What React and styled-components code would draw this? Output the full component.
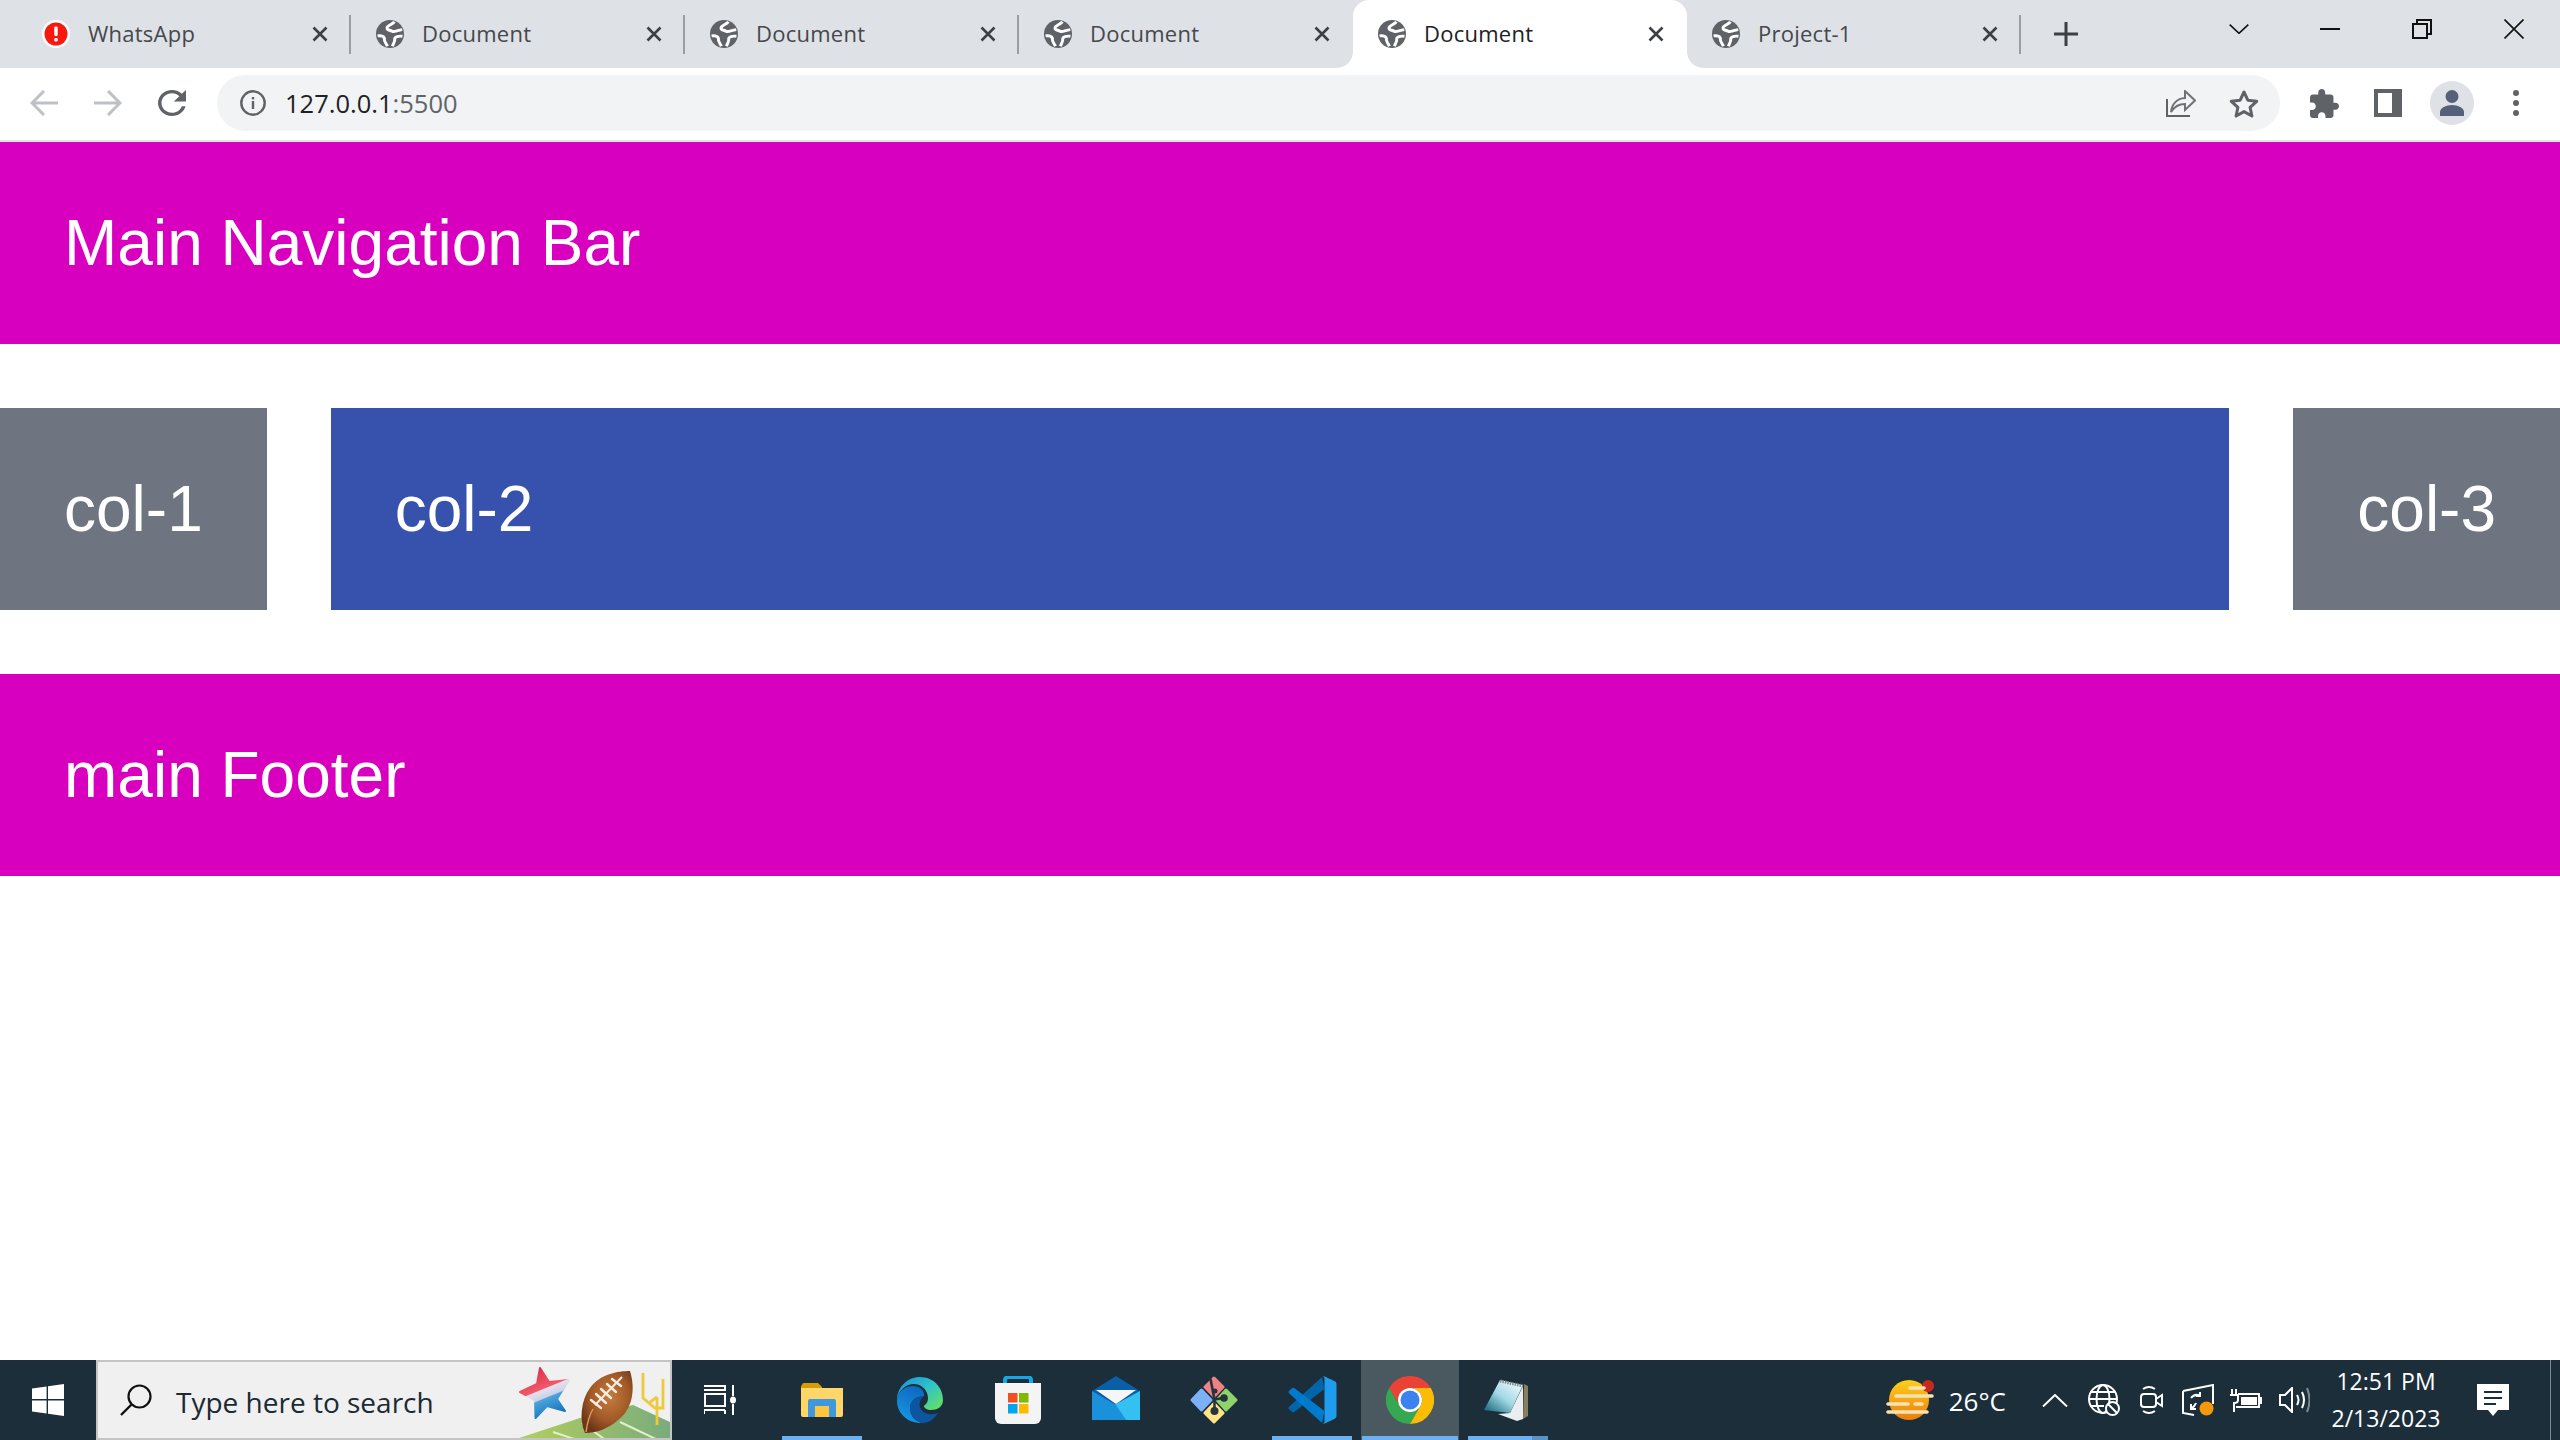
import React from "react";
import styled, { createGlobalStyle } from "styled-components";

const Global = createGlobalStyle`
  html, body { margin: 0; padding: 0; background: #fff; }
  * { box-sizing: border-box; }
`;

const Screen = styled.div`
  width: 2560px;
  height: 1440px;
  display: flex;
  flex-direction: column;
  overflow: hidden;
  font-family: "Open Sans", "Noto Sans", sans-serif;
`;
const Icon = styled.svg`
  display: block;
  flex: none;
`;

/* ---------- browser chrome ---------- */
const TabStrip = styled.div`
  height: 68px;
  flex: none;
  display: flex;
  align-items: stretch;
  padding-left: 17px;
  background: #dee1e6;
`;
const Tab = styled.div`
  position: relative;
  width: 334px;
  flex: none;
  display: flex;
  align-items: center;
  padding-left: 25px;
  padding-right: 23px;
  font-size: 22px;
  letter-spacing: 0.25px;
  color: ${(p) => (p.$active ? "#202124" : "#45484d")};
  background: ${(p) => (p.$active ? "#fff" : "transparent")};
  border-radius: ${(p) => (p.$active ? "16px 16px 0 0" : "0")};
  ${(p) =>
    p.$sep &&
    `&::after { content: ""; position: absolute; right: 0; top: 15px; width: 2px; height: 39px; background: #9a9da1; }`}
  ${(p) =>
    p.$active &&
    `&::before { content: ""; position: absolute; left: -16px; bottom: 0; width: 16px; height: 16px; background: radial-gradient(circle at 0 0, transparent 15.5px, #fff 16px); }
     &::after { content: ""; position: absolute; right: -16px; bottom: 0; width: 16px; height: 16px; background: radial-gradient(circle at 100% 0, transparent 15.5px, #fff 16px); }`}
`;
const TabTitle = styled.span`
  margin-left: 18px;
  padding-bottom: 3px;
  flex: 1;
  white-space: nowrap;
`;
const NewTab = styled.svg`
  width: 24px;
  height: 24px;
  margin: 22px 0 0 33px;
  flex: none;
`;
const WindowControls = styled.div`
  margin-left: auto;
  display: flex;
  align-items: flex-start;
`;
const WinGlyph = styled.svg`
  display: block;
  flex: none;
  margin-top: ${(p) => p.$top}px;
  margin-right: ${(p) => p.$right}px;
`;

const Toolbar = styled.div`
  height: 74px;
  flex: none;
  display: flex;
  align-items: center;
  padding: 0 0 2px 30px;
  background: #fff;
  border-bottom: 2px solid #e2e3e5;
`;
const NavGlyph = styled.svg`
  display: block;
  flex: none;
  margin-left: ${(p) => p.$left || 0}px;
  margin-right: ${(p) => p.$right || 0}px;
`;
const Omnibox = styled.div`
  width: 2063px;
  height: 56px;
  flex: none;
  display: flex;
  align-items: center;
  padding: 0 21px 0 23px;
  border-radius: 28px;
  background: #f1f3f4;
`;
const Address = styled.span`
  flex: 1;
  margin-left: 19px;
  font-size: 25.5px;
  color: #202124;
  white-space: nowrap;
`;
const Port = styled.span`
  color: #5f6368;
`;
const Avatar = styled.div`
  width: 44px;
  height: 44px;
  flex: none;
  margin-right: 39px;
  border-radius: 50%;
  background: #dee1e6;
  display: flex;
  align-items: center;
  justify-content: center;
`;
const ToolDots = styled.div`
  display: flex;
  flex-direction: column;
  gap: 4px;
  flex: none;
`;
const Dot = styled.i`
  display: block;
  width: 6px;
  height: 6px;
  border-radius: 50%;
  background: #5f6368;
`;

/* ---------- page ---------- */
const Page = styled.main`
  flex: 1;
  min-height: 0;
  background: #fff;
  font-family: "Liberation Sans", Arial, sans-serif;
  font-size: 64px;
  color: #fff;
`;
const Band = styled.div`
  padding: 64px;
  background: #d800be;
`;
const Columns = styled.div`
  display: flex;
  gap: 64px;
  margin: 64px 0;
`;
const Column = styled.div`
  padding: 64px;
  flex: ${(p) => (p.$grow ? "1" : "none")};
  background: ${(p) => (p.$grow ? "#3752ad" : "#6f7580")};
`;

/* ---------- taskbar ---------- */
const Taskbar = styled.footer`
  height: 80px;
  flex: none;
  display: flex;
  align-items: stretch;
  background: #1c2e39;
  color: #fff;
`;
const StartButton = styled.div`
  width: 96px;
  flex: none;
  display: flex;
  align-items: center;
  padding-left: 32px;
`;
const SearchBox = styled.div`
  position: relative;
  width: 576px;
  flex: none;
  display: flex;
  align-items: center;
  padding-left: 22px;
  border: 2px solid #c4c4c4;
  background: #f0f0f0;
  overflow: hidden;
`;
const SearchText = styled.span`
  margin-left: 24px;
  padding-top: 3px;
  font-size: 28px;
  color: #1c2a33;
  white-space: nowrap;
`;
const SearchArt = styled.svg`
  position: absolute;
  right: 0;
  bottom: 0;
`;
const TaskSlot = styled.div`
  position: relative;
  width: ${(p) => p.$w || 98}px;
  flex: none;
  display: flex;
  align-items: center;
  justify-content: center;
  padding-bottom: ${(p) => p.$lift || 0}px;
  padding-right: ${(p) => p.$inset || 0}px;
  ${(p) => p.$hot && "background: #4a5860;"}
  ${(p) => p.$on && `&::after { content: ""; position: absolute; bottom: 0; left: 50%; margin-left: -${p.$hot ? 48 : 40}px; width: ${p.$hot ? 96 : 80}px; height: 4px; background: ${p.$split ? "linear-gradient(90deg,#6cb0f2 80%,#5a92c8 80%)" : "#6cb0f2"}; }`}
`;
const Tray = styled.div`
  margin-left: auto;
  display: flex;
  align-items: center;
  padding-right: 9px;
`;
const TrayGlyph = styled.svg`
  display: block;
  flex: none;
  margin-left: ${(p) => p.$gap || 0}px;
`;
const Temp = styled.span`
  margin-left: 15px;
  padding-top: 2px;
  font-size: 26px;
  white-space: nowrap;
`;
const Clock = styled.div`
  margin-left: 22px;
  width: 108px;
  display: flex;
  flex-direction: column;
  align-items: center;
  gap: 6px;
  font-size: 23px;
  line-height: 31px;
  white-space: nowrap;
`;
const EdgeLine = styled.div`
  width: 1px;
  height: 80px;
  margin-left: 41px;
  background: #7d8890;
`;

/* ---------- icons ---------- */
const Globe = () => (
  <Icon width="28" height="28" viewBox="0 0 16 16">
    <circle cx="8" cy="8" r="8" fill="#5f6368" />
    <g fill="none" stroke="#fff" strokeWidth="1.700">
      <path d="M10.500 1C9.500 2.700 6.200 3 6.300 4.600 6.400 6 8 5.600 9.200 6.400 10.500 7.200 12 5.800 15 5.500" />
      <path d="M.9 9.100C3 8.600 5 9.500 4.800 11 4.600 12.500 6 13.500 6.500 15" />
      <path d="M15.100 9.300C13 9 10.500 9.500 10.700 11 10.900 12.500 9.800 13.500 9.400 15" />
    </g>
  </Icon>
);
const Alert = () => (
  <Icon width="28" height="30" viewBox="0 0 28 30">
    <circle cx="14" cy="15" r="14" fill="#fff" />
    <circle cx="14" cy="15" r="11.500" fill="#f8180e" />
    <rect x="12.300" y="7.500" width="3.400" height="9.500" rx="1.200" fill="#fff" />
    <rect x="12.300" y="19" width="3.400" height="3.400" rx="1.200" fill="#fff" />
  </Icon>
);
const CloseX = () => (
  <Icon width="16" height="16" viewBox="0 0 16 16">
    <path d="M1.500 1.500l13 13M14.500 1.500l-13 13" stroke="#3c4043" strokeWidth="2.600" fill="none" />
  </Icon>
);

const TABS = [
  { title: "WhatsApp", alert: true, sep: true },
  { title: "Document", sep: true },
  { title: "Document", sep: true },
  { title: "Document" },
  { title: "Document", active: true },
  { title: "Project-1", sep: true },
];

const WindowsLogo = () => (
  <Icon width="32" height="32" viewBox="0 0 32 32">
    <path fill="#fff" d="M0 4.500 14.600 2.500V15H0zM16 2.300 32 0v15H16zM0 16.500h14.600V29.500L0 27.500zM16 16.500h16V32L16 29.700z" />
  </Icon>
);
const Magnifier = () => (
  <Icon width="32" height="32" viewBox="0 0 32 32">
    <circle cx="19.500" cy="12.500" r="11" fill="none" stroke="#111" strokeWidth="2.200" />
    <path d="M11.500 20.500 1 31" stroke="#111" strokeWidth="2.400" />
  </Icon>
);
const BannerArt = () => (
  <SearchArt width="155" height="76" viewBox="515 1362 155 76">
    <defs>
      <linearGradient id="fld" x1="0" y1="0" x2="1" y2="0">
        <stop offset="0" stopColor="#b4d05c" />
        <stop offset="1" stopColor="#79ab7e" />
      </linearGradient>
      <radialGradient id="ball" cx="0.550" cy="0.420" r="0.620">
        <stop offset="0" stopColor="#c67c3e" />
        <stop offset="0.600" stopColor="#a25a28" />
        <stop offset="1" stopColor="#6e3517" />
      </radialGradient>
      <linearGradient id="starg" x1="0.250" y1="0" x2="0.650" y2="1">
        <stop offset="0" stopColor="#d92c48" />
        <stop offset="0.430" stopColor="#ef5a68" />
        <stop offset="0.450" stopColor="#e8dfee" />
        <stop offset="0.600" stopColor="#cbd2e8" />
        <stop offset="0.620" stopColor="#4da4da" />
        <stop offset="1" stopColor="#0d70ba" />
      </linearGradient>
    </defs>
    <path fill="url(#fld)" d="M513 1440 580 1418 633 1405 672 1423V1440Z" />
    <path d="M553 1432 580 1441M620 1422 660 1441M582 1423 607 1441" stroke="#e6efc8" strokeWidth="2" fill="none" />
    <path d="M643 1373V1398L655 1408H663V1379M657 1397V1425M650 1402 657 1397" stroke="#eec93a" strokeWidth="2.800" fill="none" />
    <path fill="url(#starg)" stroke="url(#starg)" strokeWidth="2" strokeLinejoin="round" d="M540 1368 549 1382 569 1380 557 1399 565 1411 547 1406 535.500 1418 535 1400 520 1392 537 1384Z" />
    <path fill="url(#ball)" d="M630 1371C636 1390 632 1410 618 1420 608 1429 596 1433 585 1433 579 1420 581 1400 590 1388 600 1374 618 1371 630 1371Z" />
    <path d="M595 1405 622 1377" stroke="#f6ece0" strokeWidth="2" fill="none" />
    <path d="M591 1400 601 1408M596 1394 606 1403M601 1389 611 1398M607 1384 616 1392M612 1379 621 1386" stroke="#f6ece0" strokeWidth="2.400" strokeLinecap="round" fill="none" />
    <path d="M586 1432C587 1424 589 1416 593 1409" stroke="#d89a66" strokeWidth="1.400" fill="none" />
  </SearchArt>
);
const TaskView = () => (
  <Icon width="32" height="30" viewBox="0 0 32 30">
    <g fill="none" stroke="#fff" strokeWidth="2">
      <path d="M0 1H21V5H0M1 9H21V21H1ZM0 29V25H21M21 29V25" />
      <path d="M29 0V11M29 19V30" />
    </g>
    <ellipse cx="29" cy="15" rx="3" ry="3.500" fill="#fff" />
  </Icon>
);
const Explorer = () => (
  <Icon width="42" height="34" viewBox="0 0 42 34">
    <path fill="#d79b04" d="M1 2a2 2 0 0 1 2-2h14l4 4v6H0V3z" />
    <path fill="#ffd768" d="M0 5h42v27a2 2 0 0 1-2 2H2a2 2 0 0 1-2-2z" />
    <path fill="#3d98de" d="M7 18a2 2 0 0 1 2-2h24a2 2 0 0 1 2 2v16h-7V23H14v11H7z" />
    <rect x="14" y="23" width="14" height="11" fill="#fcc63d" />
  </Icon>
);
const Edge = () => (
  <Icon width="48" height="48" viewBox="0 0 48 48">
    <defs>
      <linearGradient id="edgeA" x1="0.100" y1="0.100" x2="0.950" y2="0.800">
        <stop offset="0" stopColor="#1b9ad6" />
        <stop offset="0.550" stopColor="#32c3c8" />
        <stop offset="1" stopColor="#5fdc70" />
      </linearGradient>
      <linearGradient id="edgeB" x1="0.700" y1="0" x2="0.300" y2="1">
        <stop offset="0" stopColor="#0c68c0" />
        <stop offset="1" stopColor="#1798e4" />
      </linearGradient>
    </defs>
    <path fill="url(#edgeA)" d="M1 23C2 10 12 1 24 1 38 1 47 12 47 24 47 31 41 34 35 34 31 34 28 32 28 30 28 29 32 28 32 22 32 14 25 8 18 8 10 8 3 14 1 23Z" />
    <path fill="url(#edgeB)" d="M1 23C3 14 10 10 17 10 23 10 29 14 28 20 20 20 14 25 14 32 14 40 20 46 27 47 12 48 0 37 1 23Z" />
    <path fill="#0c55a0" d="M27 47C20 46 14 40 14 32 14 25 20 20 28 20 24 23 23 27 24 31 26 37 33 40 42 37 38 43 33 47 27 47Z" />
  </Icon>
);
const Store = () => (
  <Icon width="46" height="48" viewBox="0 0 46 48">
    <path d="M10 13V4a3 3 0 0 1 3-3h20a3 3 0 0 1 3 3v9" fill="none" stroke="#14a8e6" strokeWidth="4" />
    <path fill="#f4f4f4" d="M0 7h46v35a6 6 0 0 1-6 6H6a6 6 0 0 1-6-6z" />
    <rect x="13" y="17" width="9.500" height="9.500" fill="#f25022" />
    <rect x="24" y="17" width="9.500" height="9.500" fill="#7fba00" />
    <rect x="13" y="28" width="9.500" height="9.500" fill="#00a4ef" />
    <rect x="24" y="28" width="9.500" height="9.500" fill="#ffb900" />
  </Icon>
);
const Mail = () => (
  <Icon width="48" height="44" viewBox="0 0 48 44">
    <path fill="#0b5ea8" d="M24 0 48 15V30H0V15Z" />
    <path fill="#f6f6f6" d="M4 14H44L24 28Z" />
    <path fill="#35c0f2" d="M48 15V44H34L20 30 24 28Z" />
    <path fill="#1b91dc" d="M0 15 24 29 34 44H0Z" />
  </Icon>
);
const GitTool = () => (
  <Icon width="48" height="48" viewBox="0 0 48 48">
    <g strokeWidth="3" strokeLinejoin="round">
      <path fill="#f08284" stroke="#f08284" d="M24 2 33 11 24 20.500 15 11Z" />
      <path fill="#7cb1fa" stroke="#7cb1fa" d="M11.500 14 21 24 11.500 34 2 24Z" />
      <path fill="#8fd46a" stroke="#8fd46a" d="M36 14 46 24 36 34 27 24Z" />
      <path fill="#ffe585" stroke="#ffe585" d="M24 27.500 33 37 24 46 15 37Z" />
    </g>
    <g stroke="#26343d" strokeWidth="2.600" fill="none">
      <path d="M20.500 3 24.500 23.500V34M24.500 23.500 33 22" />
    </g>
    <circle cx="24.500" cy="35" r="4" fill="#26343d" />
    <circle cx="34" cy="22" r="3.800" fill="#26343d" />
    <circle cx="25" cy="15" r="2.500" fill="#26343d" />
  </Icon>
);
const VSCode = () => (
  <Icon width="49" height="48" viewBox="0 0 100 100">
    <path fill="#0065a9" d="M70 2 1.600 63.500a4 4 0 0 0 0 6L7 74.500a4 4 0 0 0 5 .3L75 27Z" />
    <path fill="#007acc" d="M70 98 1.600 36.500a4 4 0 0 1 0-6L7 25.500a4 4 0 0 1 5-.3L75 73Z" />
    <path fill="#1f9cf0" d="M71 98.500a6 6 0 0 0 4.500.5L96.500 89a6 6 0 0 0 3.500-5.500V16.500A6 6 0 0 0 96.500 11L75.500 1A6 6 0 0 0 71 1.500C74 1 75 3 75 5V95C75 97 74 99 71 98.500Z" />
  </Icon>
);
const Chrome = () => (
  <Icon width="48" height="48" viewBox="0 0 48 48">
    <path fill="#ea4335" d="M24 12H44.800A24 24 0 0 0 3.200 12L13.600 30A12 12 0 0 1 24 12Z" />
    <path fill="#34a853" d="M13.600 30 3.200 12A24 24 0 0 0 24 48L34.400 30A12 12 0 0 1 13.600 30Z" />
    <path fill="#fbbc04" d="M34.400 30 24 48A24 24 0 0 0 44.800 12H24A12 12 0 0 1 34.400 30Z" />
    <circle cx="24" cy="24" r="12" fill="#fff" />
    <circle cx="24" cy="24" r="9.500" fill="#3b82f0" />
  </Icon>
);
const Notepad = () => (
  <Icon width="44" height="43" viewBox="0 0 44 43">
    <defs>
      <linearGradient id="pad" x1="0.100" y1="0.900" x2="0.800" y2="0.100">
        <stop offset="0" stopColor="#257688" />
        <stop offset="0.500" stopColor="#a3d8e6" />
        <stop offset="1" stopColor="#e4f5f9" />
      </linearGradient>
    </defs>
    <path fill="#8a7f5c" d="M40 5 44 7V37L39 40Z" />
    <path fill="#e9eef0" d="M26 34 39 7V40L33 42 14 35Z" />
    <path fill="url(#pad)" d="M16 1 39 6 26 34 0 31Z" />
    <path d="M16 2 39 7" stroke="#7d8a8e" strokeWidth="3" strokeDasharray="1.500 1" />
  </Icon>
);
const Weather = () => (
  <TrayGlyph width="48" height="40" viewBox="0 0 48 40">
    <defs>
      <linearGradient id="sun" x1="0" y1="0" x2="0" y2="1">
        <stop offset="0" stopColor="#ffcf1a" />
        <stop offset="1" stopColor="#ec7d10" />
      </linearGradient>
    </defs>
    <circle cx="23" cy="20" r="20" fill="url(#sun)" />
    <circle cx="42" cy="6" r="6" fill="#c9281e" />
    <g stroke="#f6e3b4" strokeWidth="3.600" strokeLinecap="round">
      <path d="M24 8H38M10 16H46M2 24H22M29 24H36M2 32H41" />
    </g>
  </TrayGlyph>
);

const TRAY_STROKE = { fill: "none", stroke: "#fff", strokeWidth: 2 };

export default function App() {
  return (
    <Screen>
      <Global />
      <TabStrip>
        {TABS.map((t, i) => (
          <Tab key={i} $active={t.active} $sep={t.sep}>
            {t.alert ? <Alert /> : <Globe />}
            <TabTitle>{t.title}</TabTitle>
            <CloseX />
          </Tab>
        ))}
        <NewTab viewBox="0 0 24 24">
          <path d="M12 0V24M0 12H24" stroke="#3c4043" strokeWidth="3" />
        </NewTab>
        <WindowControls>
          <WinGlyph $top={24} $right={71} width="20" height="10" viewBox="0 0 20 10">
            <path d="M.7.7 10 9.300 19.300.7" fill="none" stroke="#111" strokeWidth="1.600" />
          </WinGlyph>
          <WinGlyph $top={28} $right={72} width="20" height="2" viewBox="0 0 20 2">
            <rect width="20" height="2" fill="#111" />
          </WinGlyph>
          <WinGlyph $top={19} $right={72} width="20" height="20" viewBox="0 0 20 20">
            <path d="M1 5H15V19H1ZM5 5V1H19V15H15" fill="none" stroke="#111" strokeWidth="2" />
          </WinGlyph>
          <WinGlyph $top={19} $right={36} width="20" height="20" viewBox="0 0 20 20">
            <path d="M.5.500l19 19M19.500.500l-19 19" fill="none" stroke="#111" strokeWidth="1.600" />
          </WinGlyph>
        </WindowControls>
      </TabStrip>

      <Toolbar>
        <NavGlyph $right={36} width="28" height="26" viewBox="0 0 28 26">
          <path d="M28 13H3M14 1 2 13 14 25" fill="none" stroke="#bdc1c6" strokeWidth="3" />
        </NavGlyph>
        <NavGlyph $right={36} width="28" height="26" viewBox="0 0 28 26">
          <path d="M0 13H25M14 1 26 13 14 25" fill="none" stroke="#bdc1c6" strokeWidth="3" />
        </NavGlyph>
        <NavGlyph $right={31} width="28" height="26" viewBox="4 4 16 16" preserveAspectRatio="none">
          <path
            fill="#5f6368"
            d="M17.650 6.350C16.200 4.900 14.210 4 12 4c-4.420 0-7.990 3.580-7.990 8s3.570 8 7.990 8c3.730 0 6.840-2.550 7.730-6h-2.080c-.82 2.330-3.040 4-5.650 4-3.310 0-6-2.690-6-6s2.690-6 6-6c1.660 0 3.140.69 4.220 1.780L13 11h7V4l-2.350 2.350z"
          />
        </NavGlyph>
        <Omnibox>
          <Icon width="26" height="26" viewBox="0 0 26 26">
            <circle cx="13" cy="13" r="11.700" fill="none" stroke="#5f6368" strokeWidth="2.400" />
            <rect x="11.800" y="11" width="2.400" height="8" fill="#5f6368" />
            <rect x="11.800" y="7" width="2.400" height="2.400" fill="#5f6368" />
          </Icon>
          <Address>
            127.0.0.1<Port>:5500</Port>
          </Address>
          <NavGlyph $right={33} width="30" height="27" viewBox="0 0 30 27">
            <path d="M1 9V26H24" fill="none" stroke="#5f6368" strokeWidth="2" />
            <path d="M5 22C6 14 11 8.500 19 8V1L29 10.500 19 20V14C13 14 8 17 5 22Z" fill="none" stroke="#6f7378" strokeWidth="2" />
          </NavGlyph>
          <NavGlyph width="30" height="29" viewBox="0 0 30 29">
            <path d="M15 3 18.800 11.200 27.700 12.300 21.100 18.300 22.900 27 15 22.600 7.100 27 8.900 18.300 2.300 12.300 11.200 11.200Z" fill="none" stroke="#5f6368" strokeWidth="3" strokeLinejoin="round" />
          </NavGlyph>
        </Omnibox>
        <NavGlyph $left={30} $right={35} width="29" height="29" viewBox="2 1 21 21">
          <path
            fill="#5f6368"
            d="M20.500 11H19V7c0-1.100-.9-2-2-2h-4V3.500C13 2.120 11.880 1 10.500 1S8 2.120 8 3.500V5H4c-1.100 0-1.990.9-1.990 2v3.800H3.500c1.490 0 2.700 1.210 2.700 2.700s-1.210 2.700-2.700 2.700H2V20c0 1.100.9 2 2 2h3.800v-1.500c0-1.490 1.210-2.700 2.700-2.700 1.490 0 2.700 1.210 2.700 2.700V22H17c1.100 0 2-.9 2-2v-4h1.500c1.380 0 2.500-1.120 2.500-2.500S21.880 11 20.500 11z"
          />
        </NavGlyph>
        <NavGlyph $right={28} width="28" height="28" viewBox="0 0 28 28">
          <path fill="#5f6368" d="M0 0h28v28H0zM4 4v20h14V4z" fillRule="evenodd" />
        </NavGlyph>
        <Avatar>
          <Icon width="24" height="26" viewBox="0 0 24 26">
            <circle cx="12" cy="6.500" r="6.500" fill="#56607a" />
            <path d="M0 26v-4c0-4 6-7 12-7s12 3 12 7v4z" fill="#56607a" />
          </Icon>
        </Avatar>
        <ToolDots>
          <Dot />
          <Dot />
          <Dot />
        </ToolDots>
      </Toolbar>

      <Page>
        <Band>Main Navigation Bar</Band>
        <Columns>
          <Column>col-1</Column>
          <Column $grow>col-2</Column>
          <Column>col-3</Column>
        </Columns>
        <Band>main Footer</Band>
      </Page>

      <Taskbar>
        <StartButton>
          <WindowsLogo />
        </StartButton>
        <SearchBox>
          <Magnifier />
          <SearchText>Type here to search</SearchText>
          <BannerArt />
        </SearchBox>
        <TaskSlot $w={101} $inset={5}>
          <TaskView />
        </TaskSlot>
        <TaskSlot $on>
          <Explorer />
        </TaskSlot>
        <TaskSlot>
          <Edge />
        </TaskSlot>
        <TaskSlot>
          <Store />
        </TaskSlot>
        <TaskSlot $lift={4}>
          <Mail />
        </TaskSlot>
        <TaskSlot>
          <GitTool />
        </TaskSlot>
        <TaskSlot $on>
          <VSCode />
        </TaskSlot>
        <TaskSlot $on $hot>
          <Chrome />
        </TaskSlot>
        <TaskSlot $on $split $inset={5}>
          <Notepad />
        </TaskSlot>
        <Tray>
          <Weather />
          <Temp>26°C</Temp>
          <TrayGlyph $gap={36} width="26" height="13" viewBox="0 0 26 13">
            <path d="M1 12.500 13 1 25 12.500" {...TRAY_STROKE} />
          </TrayGlyph>
          <TrayGlyph $gap={20} width="32" height="32" viewBox="0 0 32 32">
            <g {...TRAY_STROKE}>
              <circle cx="15" cy="15" r="14" />
              <ellipse cx="15" cy="15" rx="6.500" ry="14" />
              <path d="M1 15H29M3 8H27M3 22H16" />
              <circle cx="24.500" cy="24.500" r="6.500" fill="#1c2e39" />
              <path d="M20 20l9 9" />
            </g>
          </TrayGlyph>
          <TrayGlyph $gap={20} width="23" height="30" viewBox="0 0 23 30">
            <g {...TRAY_STROKE}>
              <rect x="1" y="9" width="15" height="13" rx="3" />
              <path d="M16 14 22 10V21L16 17M3 4Q9 0 15 4M3 26Q9 30 15 26" />
            </g>
          </TrayGlyph>
          <TrayGlyph $gap={19} width="32" height="32" viewBox="0 0 32 32">
            <g {...TRAY_STROKE}>
              <path d="M1 7 31 1V20M1 7V29L12 31" />
              <path d="M9 14Q13 9 18 12M18 8V12H14M9 20V25H14M9 25Q13 22 14 19" />
            </g>
            <circle cx="24.500" cy="24.500" r="7" fill="#f39a0c" />
          </TrayGlyph>
          <TrayGlyph $gap={16} width="32" height="24" viewBox="0 0 32 24">
            <g {...TRAY_STROKE}>
              <path d="M2 1V7M6 1V7M0 7H8V12C8 14 6 15 4 15V24" />
              <path d="M8 6H29V19H6" />
            </g>
            <rect x="11" y="9" width="16" height="8" fill="#fff" />
            <rect x="30" y="9" width="2" height="7" fill="#fff" />
          </TrayGlyph>
          <TrayGlyph $gap={17} width="31" height="26" viewBox="0 0 31 26">
            <g {...TRAY_STROKE}>
              <path d="M1 8H6L13 1V25L6 18H1Z" />
              <path d="M18 8Q21 13 18 18M23 5Q27 13 23 21" />
            </g>
            <path d="M28 1Q33 13 28 25" fill="none" stroke="#7d8890" strokeWidth="2" />
          </TrayGlyph>
          <Clock>
            <span>12:51 PM</span>
            <span>2/13/2023</span>
          </Clock>
          <TrayGlyph $gap={37} width="32" height="32" viewBox="0 0 32 32">
            <path fill="#fff" d="M0 0H32V26H21L16 32 11 26H0Z" />
            <path d="M7 8H25M7 14H25M7 20H19" stroke="#1c2e39" strokeWidth="2" />
          </TrayGlyph>
          <EdgeLine />
        </Tray>
      </Taskbar>
    </Screen>
  );
}
